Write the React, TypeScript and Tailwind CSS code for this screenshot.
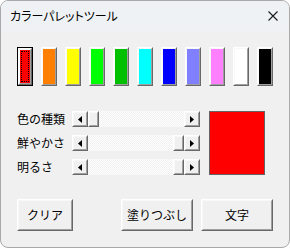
import type { ReactNode } from 'react';

const swatches = [
  '#ff0000',
  '#ff8000',
  '#ffff00',
  '#00ff00',
  '#00c000',
  '#00ffff',
  '#0000ff',
  '#8080ff',
  '#ff80ff',
  '#ffffff',
  '#000000',
];

function Raised({ className = '', children }: { className?: string; children?: ReactNode }) {
  return (
    <div className={`border border-t-white border-l-white border-r-[#696969] border-b-[#696969] ${className}`}>
      <div className="flex h-full w-full border border-t-[#f8f8f8] border-l-[#f8f8f8] border-r-[#a0a0a0] border-b-[#a0a0a0]">
        {children}
      </div>
    </div>
  );
}

function Arrow({ dir }: { dir: 'left' | 'right' }) {
  return (
    <Raised className="h-4 w-4 shrink-0 bg-[#f0f0f0]">
      <div className="flex flex-1 items-center justify-center">
        <svg width="4" height="7" viewBox="0 0 4 7">
          <polygon points={dir === 'left' ? '4,0 0,3.5 4,7' : '0,0 4,3.5 0,7'} fill="#000" />
        </svg>
      </div>
    </Raised>
  );
}

function ScrollBar({ thumb }: { thumb: 'start' | 'end' }) {
  return (
    <div className="flex h-4 w-[128px]">
      <Arrow dir="left" />
      <div
        className={`flex flex-1 bg-[conic-gradient(#ffffff_25%,#f0f0f0_0_50%,#ffffff_0_75%,#f0f0f0_0)] bg-[length:2px_2px] ${
          thumb === 'start' ? 'justify-start' : 'justify-end'
        }`}
      >
        <Raised className="h-4 w-[11px] bg-[#f0f0f0]" />
      </div>
      <Arrow dir="right" />
    </div>
  );
}

function Button({ label, width }: { label: string; width: string }) {
  return (
    <Raised className={`h-8 ${width} bg-[#f0f0f0]`}>
      <div className="flex flex-1 items-center justify-center text-[12px] text-black">{label}</div>
    </Raised>
  );
}

export default function App() {
  return (
    <div className="h-[249px] w-[290px] bg-white font-['Noto_Sans_CJK_JP',sans-serif]">
      <div className="flex h-[248px] w-[290px] flex-col overflow-hidden rounded-[8px] border border-[#a9a9a9] bg-[#f0f0f0]">
        <div className="flex h-[30px] shrink-0 items-center justify-between bg-[#eef2f5] pl-[9px] pr-[10px]">
          <span className="text-[12px] text-black [font-feature-settings:'palt']">カラーパレットツール</span>
          <svg width="10" height="10" viewBox="0 0 10 10" className="mr-[1px]">
            <path d="M0.5 0.5 L9.5 9.5 M9.5 0.5 L0.5 9.5" stroke="#1a1a1a" strokeWidth="1.1" />
          </svg>
        </div>

        <div className="flex flex-col px-4 pt-4">
          <div className="flex gap-2">
            {swatches.map((c, i) =>
              i === 0 ? (
                <div key={c} className="h-[39px] w-4 border border-black">
                  <Raised className="h-full w-full">
                    <div className="flex-1 p-px" style={{ background: c }}>
                      <div className="h-full w-full border border-dotted border-black" />
                    </div>
                  </Raised>
                </div>
              ) : (
                <Raised key={c} className="h-[39px] w-4">
                  <div className="flex-1" style={{ background: c }} />
                </Raised>
              ),
            )}
          </div>

          <div className="mt-[25px] flex gap-[9px]">
            <div className="flex flex-col gap-2">
              {[
                ['色の種類', 'start'],
                ['鮮やかさ', 'end'],
                ['明るさ', 'end'],
              ].map(([label, thumb]) => (
                <div key={label} className="flex h-4 items-center">
                  <span className="w-[55px] text-[12px] text-black">{label}</span>
                  <ScrollBar thumb={thumb as 'start' | 'end'} />
                </div>
              ))}
            </div>
            <div className="h-[64px] w-[56px] border border-[#646464] bg-[#ff0000]" />
          </div>

          <div className="mt-6 flex">
            <Button label="クリア" width="w-[56px]" />
            <div className="ml-auto flex gap-2">
              <Button label="塗りつぶし" width="w-[72px]" />
              <Button label="文字" width="w-[72px]" />
            </div>
          </div>
        </div>
      </div>
    </div>
  );
}
